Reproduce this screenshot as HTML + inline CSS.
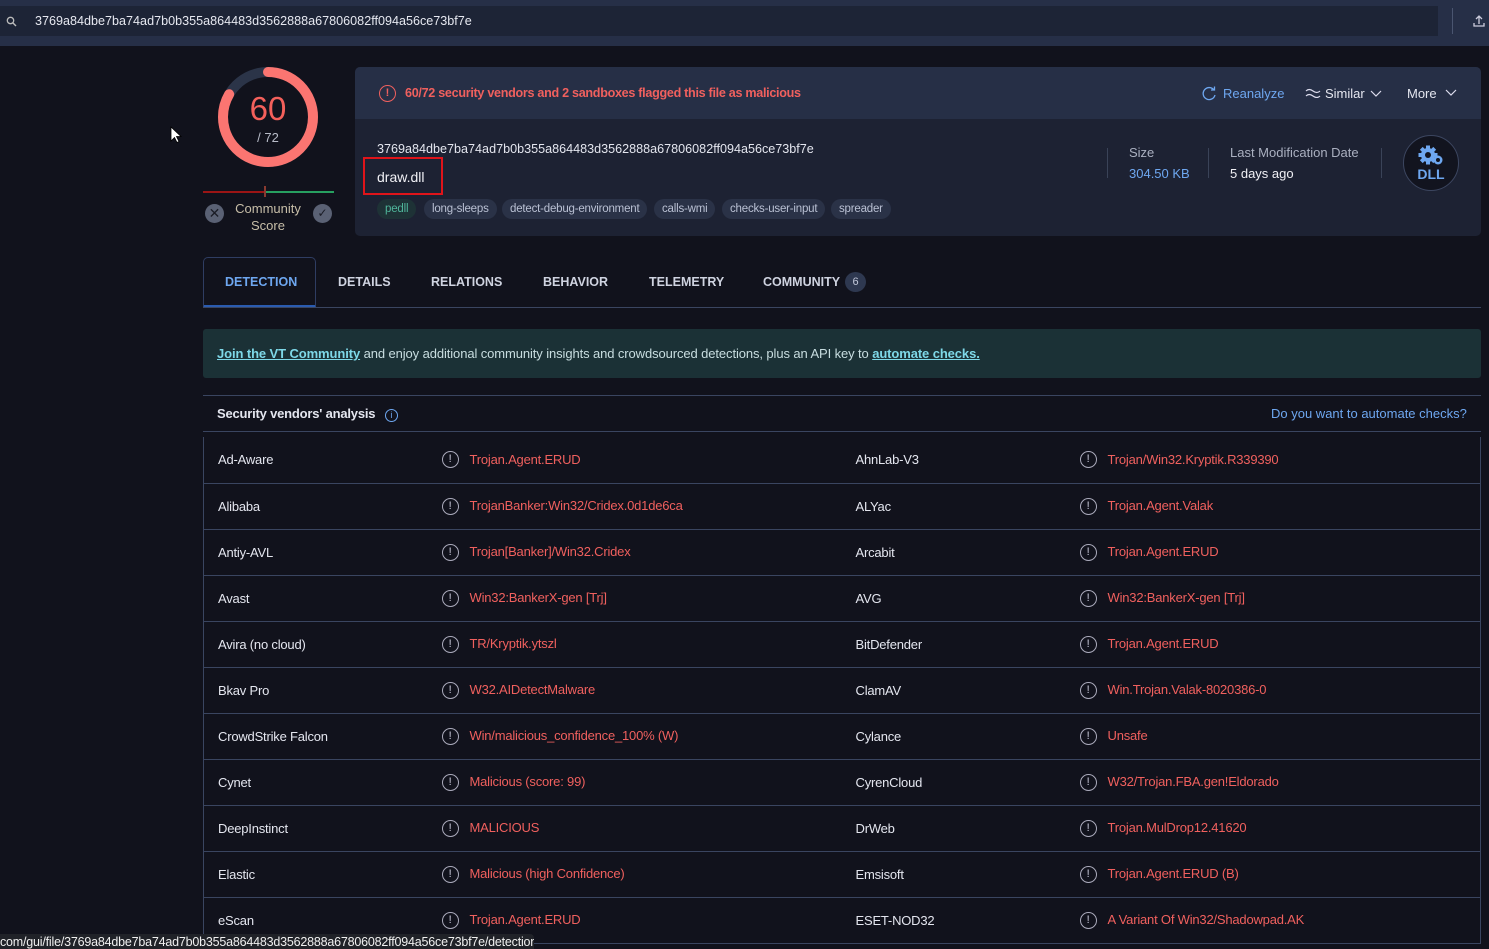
<!DOCTYPE html>
<html><head><meta charset="utf-8"><style>
*{box-sizing:border-box;margin:0;padding:0}
body{width:1489px;height:949px;overflow:hidden;background:#11121c;font-family:"Liberation Sans",sans-serif;color:#e4e6ef;position:relative;font-size:13px}
.abs{position:absolute}
.red{color:#f0605e}
.tag{position:absolute;top:199px;height:20px;line-height:20px;border-radius:10px;background:#2a3247;color:#b9c0d3;font-size:11.5px;padding:0 8px;letter-spacing:-.2px}
.tab{position:absolute;top:275px;font-weight:bold;font-size:12.5px;color:#cfd3e0}
table{position:absolute;left:203px;top:437px;width:1278px;border-collapse:collapse;border-left:1px solid #3a4560;border-right:1px solid #3a4560}
td{height:46px;border-bottom:1px solid #3a4560;font-size:13px;color:#e4e6ef;white-space:nowrap;letter-spacing:-.2px;vertical-align:middle}
.ic{display:inline-block;width:17px;height:17px;border:1.5px solid #aab;border-radius:50%;text-align:center;line-height:14px;font-size:11px;color:#ccd;vertical-align:middle;margin-right:11px}
.det{color:#f0605e;vertical-align:middle}
</style></head><body>
<div class="abs" style="left:0;top:0;width:1489px;height:46px;background:#262f47"></div>
<div class="abs" style="left:0;top:6px;width:1438px;height:30px;background:#1d2436"></div>
<div class="abs" style="left:1452px;top:8px;width:1px;height:26px;background:#4a5570"></div>
<svg class="abs" style="left:6px;top:16px" width="11" height="11"><circle cx="4.5" cy="4.5" r="3.2" stroke="#bbb" stroke-width="1.3" fill="none"/><path d="M7 7l3 3" stroke="#bbb" stroke-width="1.4"/></svg>
<div class="abs" style="left:35px;top:14px;font-size:12.6px;color:#e6e8f0">3769a84dbe7ba74ad7b0b355a864483d3562888a67806082ff094a56ce73bf7e</div>
<svg class="abs" style="left:1472px;top:14px" width="14" height="14"><path d="M7 10V2M4 5l3-3 3 3M2 9v3h10V9" stroke="#ccd" stroke-width="1.3" fill="none"/></svg>
<svg class="abs" style="left:170px;top:126px" width="12" height="18"><path d="M1 1v14l3.5-3.5 2.5 5 2-1-2.5-5H11z" fill="#fff" stroke="#000" stroke-width=".8"/></svg>

<svg class="abs" style="left:213px;top:62px" width="110" height="110">
<circle cx="55" cy="55" r="45" stroke="#2b3448" stroke-width="10" fill="none"/>
<circle cx="55" cy="55" r="45" stroke="#fb7571" stroke-width="10" fill="none" stroke-dasharray="235.6 300" transform="rotate(-90 55 55)" stroke-linecap="round"/>
</svg>
<div class="abs" style="left:218px;top:90px;width:100px;text-align:center;font-size:33px;color:#f4605b">60</div>
<div class="abs" style="left:218px;top:130px;width:100px;text-align:center;font-size:13px;color:#b8bcc8">/ 72</div>
<div class="abs" style="left:203px;top:191px;width:62px;height:2px;background:#9b1515"></div>
<div class="abs" style="left:265px;top:191px;width:69px;height:2px;background:#27a060"></div>
<div class="abs" style="left:264px;top:186px;width:2px;height:11px;background:#8a3a30"></div>
<div class="abs" style="left:205px;top:204px;width:19px;height:19px;border-radius:50%;background:#5a6174;color:#1a1c26;text-align:center;line-height:19px;font-size:14px">✕</div>
<div class="abs" style="left:313px;top:204px;width:19px;height:19px;border-radius:50%;background:#5a6174;color:#1a1c26;text-align:center;line-height:19px;font-size:12px">✓</div>
<div class="abs" style="left:228px;top:200px;width:80px;text-align:center;font-size:13px;color:#c7bea8;line-height:17px">Community<br>Score</div>

<div class="abs" style="left:355px;top:67px;width:1126px;height:169px;background:#1d2233;border-radius:5px"></div>
<div class="abs" style="left:355px;top:67px;width:1126px;height:52px;background:#262f46;border-radius:5px 5px 0 0"></div>
<div class="abs" style="left:379px;top:85px;width:17px;height:17px;border:1.5px solid #f0605e;border-radius:50%;color:#f0605e;text-align:center;font-size:11px;line-height:14px;font-weight:bold">!</div>
<div class="abs red" style="left:405px;top:86px;font-weight:bold;font-size:12.6px;letter-spacing:-.3px">60/72 security vendors and 2 sandboxes flagged this file as malicious</div>
<svg class="abs" style="left:1202px;top:86px" width="15" height="15"><path d="M12 4A6 6 0 1 0 13 9" stroke="#6ea7f0" stroke-width="1.3" fill="none"/><path d="M9 4h3.5V0.5" stroke="#6ea7f0" stroke-width="1.3" fill="none"/></svg>
<div class="abs" style="left:1223px;top:86px;font-size:13px;color:#6ea7f0">Reanalyze</div>
<svg class="abs" style="left:1305px;top:88px" width="16" height="10"><path d="M1 3q3-3 7 0t7 0M1 8q3-3 7 0t7 0" stroke="#dde" stroke-width="1.2" fill="none"/></svg>
<div class="abs" style="left:1325px;top:86px;font-size:13px;color:#e4e6ef">Similar</div>
<svg class="abs" style="left:1370px;top:90px" width="12" height="8"><path d="M1 1l5 5 5-5" stroke="#dde" stroke-width="1.2" fill="none"/></svg>
<div class="abs" style="left:1407px;top:86px;font-size:13px;color:#e4e6ef">More</div>
<svg class="abs" style="left:1445px;top:89px" width="12" height="8"><path d="M1 1l5 5 5-5" stroke="#dde" stroke-width="1.2" fill="none"/></svg>
<div class="abs" style="left:377px;top:142px;font-size:12.6px;color:#e4e6ef">3769a84dbe7ba74ad7b0b355a864483d3562888a67806082ff094a56ce73bf7e</div>
<div class="abs" style="left:363px;top:157px;width:80px;height:38px;border:2px solid #e0141a"></div>
<div class="abs" style="left:377px;top:169px;font-size:14px;color:#f0f0f5">draw.dll</div>
<div class="tag" style="left:377px;background:#1e3236;color:#4fb59a">pedll</div>
<div class="tag" style="left:424px">long-sleeps</div>
<div class="tag" style="left:502px">detect-debug-environment</div>
<div class="tag" style="left:654px">calls-wmi</div>
<div class="tag" style="left:722px">checks-user-input</div>
<div class="tag" style="left:831px">spreader</div>
<div class="abs" style="left:1107px;top:148px;width:1px;height:30px;background:#3a4358"></div>
<div class="abs" style="left:1208px;top:148px;width:1px;height:30px;background:#3a4358"></div>
<div class="abs" style="left:1381px;top:148px;width:1px;height:30px;background:#3a4358"></div>
<div class="abs" style="left:1129px;top:145px;color:#aab0c0">Size</div>
<div class="abs" style="left:1129px;top:166px;color:#6ea7f0">304.50 KB</div>
<div class="abs" style="left:1230px;top:145px;color:#aab0c0">Last Modification Date</div>
<div class="abs" style="left:1230px;top:166px;color:#f0f0f5">5 days ago</div>
<div class="abs" style="left:1403px;top:135px;width:56px;height:56px;border-radius:50%;background:#12141f;border:1px solid #3c4660"></div>
<svg class="abs" style="left:1414px;top:143px" width="32" height="26">
<g fill="#6ea7f0"><circle cx="14" cy="12" r="7"/>
<rect x="12" y="2.5" width="4" height="19"/><rect x="4.5" y="10" width="19" height="4"/>
<rect x="12" y="2.5" width="4" height="19" transform="rotate(45 14 12)"/><rect x="12" y="2.5" width="4" height="19" transform="rotate(-45 14 12)"/>
<circle cx="24" cy="17" r="4.5"/></g>
<circle cx="14" cy="12" r="3" fill="#12141f"/><circle cx="24" cy="17" r="2" fill="#12141f"/>
</svg>
<div class="abs" style="left:1403px;top:166px;width:56px;text-align:center;font-weight:bold;font-size:14px;color:#6ea7f0">DLL</div>

<div class="abs" style="left:203px;top:257px;width:113px;height:51px;border:1px solid #2f3d62;border-bottom:3px solid #2a5bb0;border-radius:5px 5px 0 0"></div>
<div class="abs" style="left:203px;top:307px;width:1278px;height:1px;background:#3a4560"></div>
<div class="tab" style="left:225px;color:#6ea7f0">DETECTION</div>
<div class="tab" style="left:338px">DETAILS</div>
<div class="tab" style="left:431px">RELATIONS</div>
<div class="tab" style="left:543px">BEHAVIOR</div>
<div class="tab" style="left:649px">TELEMETRY</div>
<div class="tab" style="left:763px">COMMUNITY</div>
<div class="abs" style="left:845px;top:272px;width:21px;height:20px;border-radius:50%;background:#2e3850;color:#c0c6d8;font-size:11px;text-align:center;line-height:20px">6</div>

<div class="abs" style="left:203px;top:329px;width:1278px;height:49px;background:#1b3136;border-radius:3px"></div>
<div class="abs" style="left:217px;top:346px;font-size:13px;color:#c8dde0;letter-spacing:-.1px"><u style="color:#7ed8e8;font-weight:bold">Join the VT Community</u> and enjoy additional community insights and crowdsourced detections, plus an API key to <u style="color:#7ed8e8;font-weight:bold">automate checks.</u></div>
<div class="abs" style="left:203px;top:395px;width:1278px;height:1px;background:#3a4560"></div>
<div class="abs" style="left:217px;top:406px;font-weight:bold;font-size:13px;color:#e4e6ef;letter-spacing:-.2px">Security vendors' analysis <span style="display:inline-block;width:13px;height:13px;border:1px solid #6ea7f0;border-radius:50%;color:#6ea7f0;font-size:9px;text-align:center;line-height:11px;margin-left:6px;font-weight:normal">i</span></div>
<div class="abs" style="left:1271px;top:406px;color:#6ea7f0">Do you want to automate checks?</div>
<div class="abs" style="left:203px;top:431px;width:1278px;height:1px;background:#3a4560"></div>

<table>
<tr><td style="padding-left:14px;width:238px">Ad-Aware</td><td style="width:414px"><span class="ic">!</span><span class="det">Trojan.Agent.ERUD</span></td><td style="width:224px">AhnLab-V3</td><td><span class="ic">!</span><span class="det">Trojan/Win32.Kryptik.R339390</span></td></tr>
<tr><td style="padding-left:14px">Alibaba</td><td><span class="ic">!</span><span class="det">TrojanBanker:Win32/Cridex.0d1de6ca</span></td><td>ALYac</td><td><span class="ic">!</span><span class="det">Trojan.Agent.Valak</span></td></tr>
<tr><td style="padding-left:14px">Antiy-AVL</td><td><span class="ic">!</span><span class="det">Trojan[Banker]/Win32.Cridex</span></td><td>Arcabit</td><td><span class="ic">!</span><span class="det">Trojan.Agent.ERUD</span></td></tr>
<tr><td style="padding-left:14px">Avast</td><td><span class="ic">!</span><span class="det">Win32:BankerX-gen [Trj]</span></td><td>AVG</td><td><span class="ic">!</span><span class="det">Win32:BankerX-gen [Trj]</span></td></tr>
<tr><td style="padding-left:14px">Avira (no cloud)</td><td><span class="ic">!</span><span class="det">TR/Kryptik.ytszl</span></td><td>BitDefender</td><td><span class="ic">!</span><span class="det">Trojan.Agent.ERUD</span></td></tr>
<tr><td style="padding-left:14px">Bkav Pro</td><td><span class="ic">!</span><span class="det">W32.AIDetectMalware</span></td><td>ClamAV</td><td><span class="ic">!</span><span class="det">Win.Trojan.Valak-8020386-0</span></td></tr>
<tr><td style="padding-left:14px">CrowdStrike Falcon</td><td><span class="ic">!</span><span class="det">Win/malicious_confidence_100% (W)</span></td><td>Cylance</td><td><span class="ic">!</span><span class="det">Unsafe</span></td></tr>
<tr><td style="padding-left:14px">Cynet</td><td><span class="ic">!</span><span class="det">Malicious (score: 99)</span></td><td>CyrenCloud</td><td><span class="ic">!</span><span class="det">W32/Trojan.FBA.gen!Eldorado</span></td></tr>
<tr><td style="padding-left:14px">DeepInstinct</td><td><span class="ic">!</span><span class="det">MALICIOUS</span></td><td>DrWeb</td><td><span class="ic">!</span><span class="det">Trojan.MulDrop12.41620</span></td></tr>
<tr><td style="padding-left:14px">Elastic</td><td><span class="ic">!</span><span class="det">Malicious (high Confidence)</span></td><td>Emsisoft</td><td><span class="ic">!</span><span class="det">Trojan.Agent.ERUD (B)</span></td></tr>
<tr><td style="padding-left:14px">eScan</td><td><span class="ic">!</span><span class="det">Trojan.Agent.ERUD</span></td><td>ESET-NOD32</td><td><span class="ic">!</span><span class="det">A Variant Of Win32/Shadowpad.AK</span></td></tr>
</table>
<div class="abs" style="left:0;top:934px;width:534px;height:15px;background:#202228;border-radius:0 4px 0 0;color:#f0f0f0;font-size:12.5px;line-height:16px;white-space:nowrap;overflow:hidden;letter-spacing:-.2px">com/gui/file/3769a84dbe7ba74ad7b0b355a864483d3562888a67806082ff094a56ce73bf7e/detection</div>
</body></html>
